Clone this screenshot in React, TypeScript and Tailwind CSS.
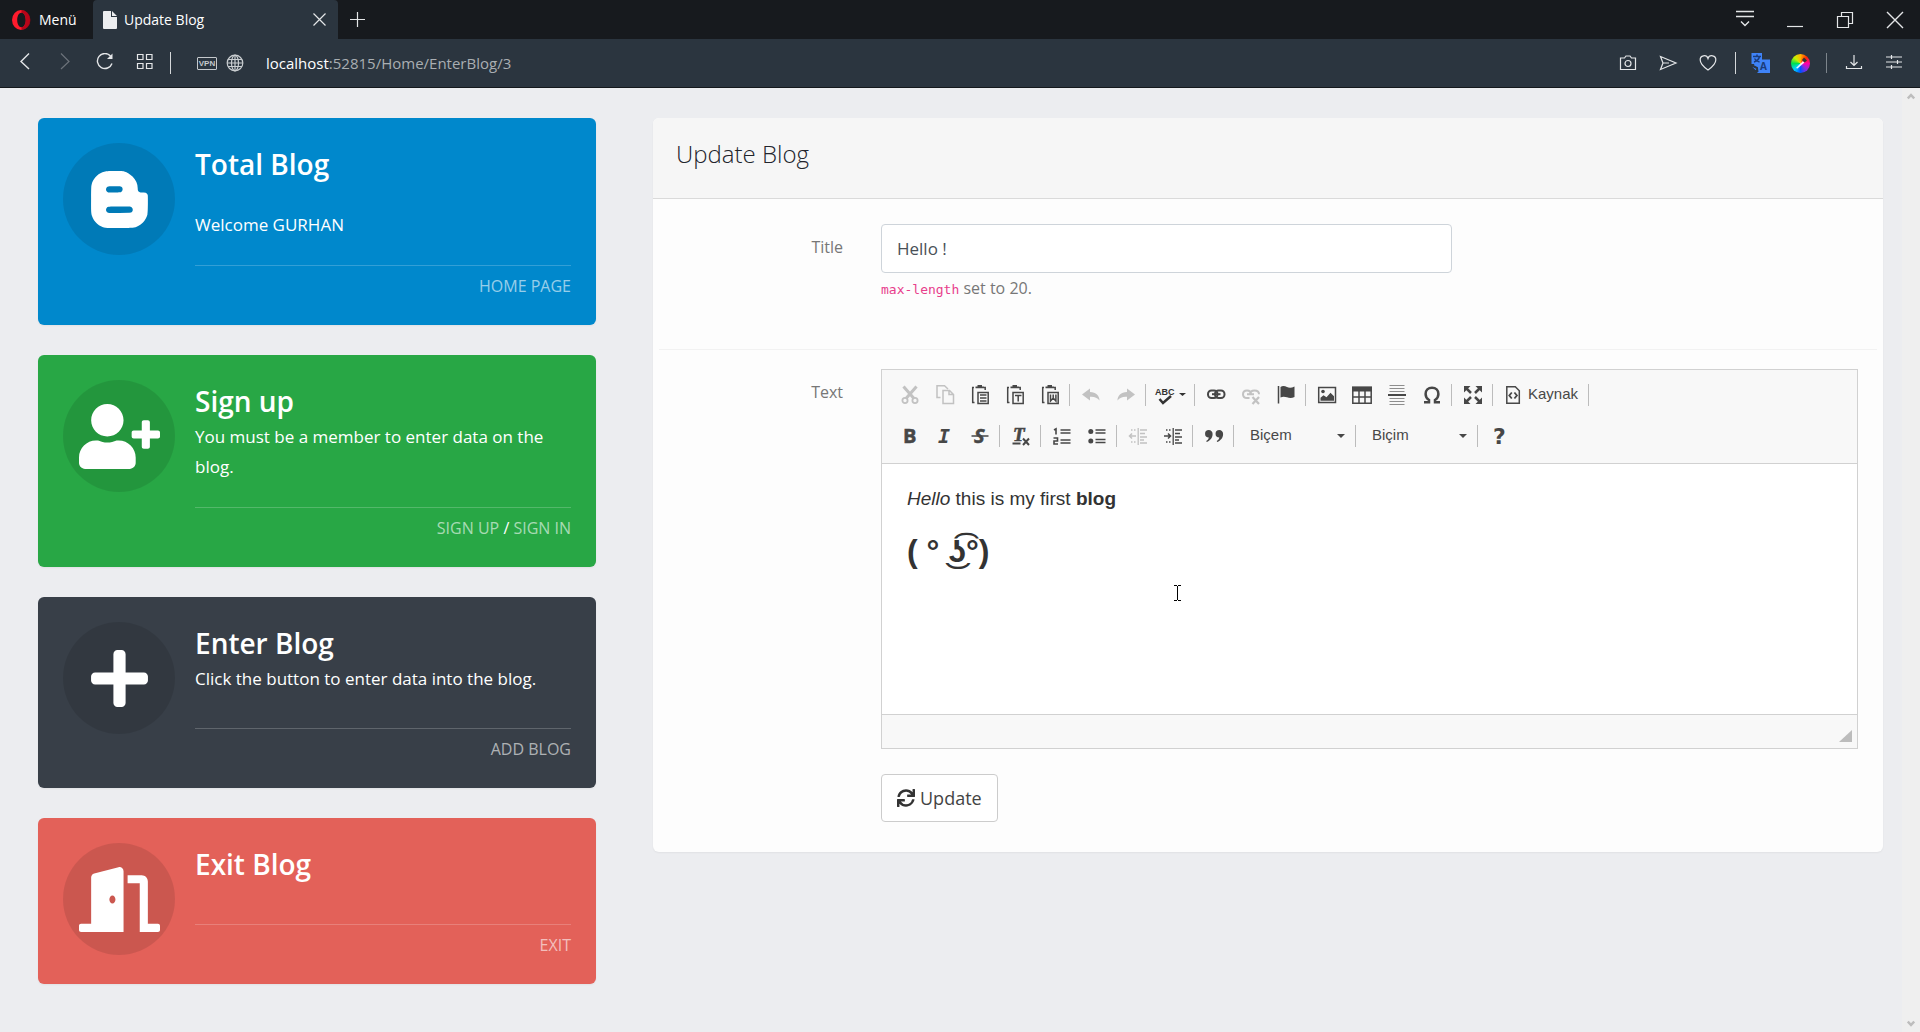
import type { ReactNode } from "react";
import { FaBloggerB, FaDoorOpen, FaPlus, FaSync, FaUserPlus } from "react-icons/fa";

/* ---------- browser chrome ---------- */

function ChromeButton({ label, wide, children }: { label: string; wide?: boolean; children: ReactNode }) {
  return (
    <button
      type="button"
      aria-label={label}
      className={`flex h-full shrink-0 items-center justify-center text-[#e4e6e8] ${wide ? "w-[50px]" : "w-10"}`}
    >
      <svg width="20" height="20" viewBox="0 0 20 20" fill="none" stroke="currentColor" strokeWidth="1.2">
        {children}
      </svg>
    </button>
  );
}

function TabStrip() {
  return (
    <div className="flex h-[39px] bg-[#171a1e]">
      <button type="button" className="flex h-full w-[93px] items-center gap-2 pl-[11px] text-sm text-white">
        <svg width="20" height="20" viewBox="0 0 20 20" className="shrink-0">
          <path fillRule="evenodd" fill="#ff1b2d" d="M10 0a9 10 0 1 0 0 20 9 10 0 1 0 0-20zM10.500 2.800c2.600 0 4.200 3.200 4.200 7.200s-1.600 7.200-4.200 7.200S6.200 14 6.200 10s1.700-7.200 4.300-7.200z" />
          <path fill="#a70014" d="M10.500 0A9 10 0 0 1 10.500 20V17.200C13 17.200 14.700 14 14.700 10S13 2.800 10.500 2.800z" opacity=".8" />
        </svg>
        Menü
      </button>
      <div className="flex w-[245px] items-center rounded-t bg-[#2b353f] pr-[12px] pb-1 pl-[10px]">
        <svg width="14" height="18" viewBox="0 0 14 18" fill="#eceef0" className="mt-1">
          <path d="M1 0h7v6h6v11a1 1 0 0 1-1 1H1a1 1 0 0 1-1-1V1a1 1 0 0 1 1-1zM9 0l5 5H9z" />
        </svg>
        <span className="mt-1 ml-[7px] flex-1 text-sm text-white">Update Blog</span>
        <button type="button" aria-label="Close tab" className="mt-1 text-[#e4e6e8]">
          <svg width="13" height="13" viewBox="0 0 13 13" stroke="currentColor" strokeWidth="1.2">
            <path d="M.5.5l12 12M12.500.5l-12 12" />
          </svg>
        </button>
      </div>
      <ChromeButton label="New tab">
        <path d="M9.500 2v15M2 9.500h15" />
      </ChromeButton>
      <div className="flex-1" />
      <ChromeButton label="Tab menu" wide>
        <path d="M1 1.500h18M1 6.500h18M6 11.500l4 4 4-4" strokeWidth="1.400" />
      </ChromeButton>
      <ChromeButton label="Minimise" wide>
        <path d="M2 16.500h16" />
      </ChromeButton>
      <ChromeButton label="Restore" wide>
        <path d="M2.500 6.500h11v11h-11zM6.500 6.500v-4h11v11h-4" />
      </ChromeButton>
      <ChromeButton label="Close" wide>
        <path d="M2 2l16 16M18 2L2 18" strokeWidth="1.400" />
      </ChromeButton>
    </div>
  );
}

function AddressBar() {
  return (
    <div className="flex h-[49px] items-center border-b border-[#14181c] bg-[#2b353f] pr-[6px] pl-[5px]">
      <ChromeButton label="Back">
        <path d="M14 .5L6 8.500l8 7.500" strokeWidth="1.400" />
      </ChromeButton>
      <ChromeButton label="Forward">
        <path d="M6 .5L14 8.500l-8 7.500" opacity=".35" />
      </ChromeButton>
      <ChromeButton label="Reload">
        <path d="M17 10.500a7.500 7.500 0 1 1-1.500-7.500" strokeWidth="1.400" />
        <path d="M17.500.5v5.500h-5.500z" fill="currentColor" stroke="none" />
      </ChromeButton>
      <ChromeButton label="Speed dial">
        <path d="M2.500 1.500h5.500v5h-5.500zM11.500 1.500h5.500v5h-5.500zM2.500 10.500h5.500v5h-5.500zM11.500 10.500h5.500v5h-5.500z" />
      </ChromeButton>
      <div className="ml-[5px] h-[22px] w-px bg-[#d5d8da]" />
      <button type="button" className="ml-[26px] h-[13px] w-5 rounded-[1px] border border-[#c5c9cc] text-center font-['Liberation_Sans'] text-[8px] leading-[11px] font-bold text-[#c5c9cc]">
        VPN
      </button>
      <svg width="18" height="18" viewBox="0 0 18 18" fill="none" stroke="#c9cdd0" strokeWidth="1.200" className="ml-[9px]">
        <circle cx="9" cy="9" r="7.800" />
        <ellipse cx="9" cy="9" rx="3.500" ry="7.800" />
        <path d="M2 5.500h14M1.200 9h15.600M2 12.500h14M9 1.200v15.600" />
      </svg>
      <span className="ml-[22px] flex-1 text-[15px] text-[#a9aeb2]">
        <span className="text-white">localhost</span>:52815/Home/EnterBlog/3
      </span>
      <ChromeButton label="Snapshot">
        <path d="M2.500 5h4l1.500-2h4l1.500 2h4v11.500h-15z" />
        <circle cx="10" cy="10.500" r="3" />
      </ChromeButton>
      <ChromeButton label="My Flow">
        <path d="M2.500 3.500l15.500 6.500-15.500 6.500 2.500-6.500z M5 10h6" />
      </ChromeButton>
      <ChromeButton label="Bookmark">
        <path d="M10 17C5 13.500 2.200 10.500 2.200 7a4 4 0 0 1 7.800-1.500A4 4 0 0 1 17.800 7c0 3.500-2.800 6.500-7.800 10z" />
      </ChromeButton>
      <div className="mr-1 ml-[7px] h-[22px] w-px bg-[#d5d8da]" />
      <ChromeButton label="Translate">
        <path d="M1.500 0h10.500v6.500h8v13.500h-12.500v-4l-2 1-3-3 2-3h-3v-10z" fill="#3f83f8" stroke="none" />
        <path d="M3 3.500h8M7 1.500v2M4 9c3-1 5-3 5.500-5.500M4.500 5.500c1 2 2.500 3 5 3.500" stroke="#1b3c7a" strokeWidth="1.500" />
        <path d="M1 12l6 3 .5 4" stroke="#2b353f" strokeWidth="2" />
        <text x="10" y="17" fontSize="10" fontWeight="700" fill="#1b3c7a" stroke="none">A</text>
      </ChromeButton>
      <button type="button" aria-label="Colour picker" className="flex h-full w-10 items-center justify-center">
        <span className="flex size-[19px] items-center justify-center rounded-full bg-[conic-gradient(#ffb400,#ff2a00,#ff00a8,#8a2be2,#0050ff,#00d0ff,#00e050,#c8f000,#ffb400)]">
          <svg width="19" height="19" viewBox="0 0 19 19">
            <path d="M5 14l7-7 1.500 1.500-7 6z" fill="#fff" opacity=".9" />
            <path d="M11 6l2-2.500 3 3-2.500 2z" fill="#333" />
          </svg>
        </span>
      </button>
      <div className="mr-[7px] ml-[6px] h-5 w-px bg-[#7d858c]" />
      <ChromeButton label="Downloads">
        <path d="M10 2v10M6.500 9l3.500 3.500 3.500-3.500M2.500 13v2.500h15V13" />
      </ChromeButton>
      <ChromeButton label="Easy setup">
        <path d="M2 4h16M2 9h16M2 14h16M7.500 2v4M13.500 7v4M7.500 12v4" />
      </ChromeButton>
    </div>
  );
}

/* ---------- left cards ---------- */

function Card({ color, icon, title, body, footer }: { color: string; icon: ReactNode; title: string; body: ReactNode; footer: ReactNode }) {
  return (
    <section className={`flex gap-5 rounded-md p-[25px] text-white shadow-xs ${color}`}>
      <div className="flex size-28 shrink-0 items-center justify-center rounded-full bg-black/10">{icon}</div>
      <div className="min-w-0 flex-1">
        <h2 className="text-[28px] leading-[42px] font-semibold">{title}</h2>
        {body}
        <div className="h-[35px] border-t border-white/20 pt-2 text-right leading-6 uppercase">{footer}</div>
      </div>
    </section>
  );
}

function CardLink({ children }: { children: ReactNode }) {
  return (
    <a href="#" className="text-white/60">
      {children}
    </a>
  );
}

/* ---------- editor toolbar ---------- */

function Tool({ label, off, children }: { label: string; off?: boolean; children: ReactNode }) {
  return (
    <button
      type="button"
      aria-label={label}
      disabled={off}
      className={`flex h-[35px] w-[35px] shrink-0 items-center justify-center text-[#474747] ${off ? "opacity-30" : ""}`}
    >
      <svg width="20" height="20" viewBox="0 0 20 20" fill="none" stroke="currentColor" strokeWidth="1.500" className="overflow-visible">
        {children}
      </svg>
    </button>
  );
}

function Sep() {
  return <span className="mr-[3px] ml-[2px] h-[22px] w-px shrink-0 bg-[#bcbcbc]" />;
}

function Clipboard({ children }: { children: ReactNode }) {
  return (
    <>
      <path d="M4 2.500H2.700v15H4.500M15.200 5V2.500H14" />
      <path d="M5.500 3.200V1.500h2V0h4.500v1.500h2v1.700z" fill="currentColor" stroke="none" />
      <path d="M8 7.500h10.200v11H8z" />
      {children}
    </>
  );
}

function Combo({ label }: { label: string }) {
  return (
    <span className="relative flex w-[116px] shrink-0 items-center">
      <select aria-label={label} className="w-full appearance-none bg-transparent pl-[13px] font-['Liberation_Sans',sans-serif] text-[15px] text-[#484848]">
        <option>{label}</option>
      </select>
      <svg width="8" height="4" viewBox="0 0 8 4" className="pointer-events-none absolute right-2" fill="#474747">
        <path d="M0 0h8L4 4z" />
      </svg>
    </span>
  );
}

function Toolbar() {
  return (
    <div className="border-b border-[#d1d1d1] bg-[#f8f8f8] px-[10px] pt-1 pb-[7px]">
      <div className="flex h-[41px] items-center">
        <Tool label="Cut" off>
          <g strokeWidth="1.800">
            <circle cx="5" cy="15.500" r="2.600" />
            <circle cx="15" cy="15.500" r="2.600" />
          </g>
          <path d="M3.500 1.500L14 13.500M16.500 1.500L6 13.500" strokeWidth="3" />
        </Tool>
        <Tool label="Copy" off>
          <path d="M5.500 12.500H2V.8h7.500L13 4M8 5.500h6.500l4 4v9H8zM14 5.500v4h4.500" />
        </Tool>
        <Tool label="Paste">
          <Clipboard>
            <path d="M10 10h6.500M10 13h6.500M10 16h6.500" />
          </Clipboard>
        </Tool>
        <Tool label="Paste as plain text">
          <Clipboard>
            <path d="M10 10.500h6.500M13.200 10.500v6" />
          </Clipboard>
        </Tool>
        <Tool label="Paste from Word">
          <Clipboard>
            <path d="M10.500 9.500v6.500l2.700-3 2.700 3V9.500M13.200 9.500v3.500" />
          </Clipboard>
        </Tool>
        <Sep />
        <Tool label="Undo" off>
          <path d="M1 9.500L9 3.500v3.500c6 0 9.500 4 9.500 8.500-2.500-3-5-4-9.500-3.700v3.700z" fill="currentColor" stroke="none" />
        </Tool>
        <Tool label="Redo" off>
          <path d="M19 9.500L11 3.500v3.500c-6 0-9.500 4-9.500 8.500 2.500-3 5-4 9.500-3.700v3.700z" fill="currentColor" stroke="none" />
        </Tool>
        <Sep />
        <button type="button" aria-label="Spell check" className="flex h-[35px] w-[43px] shrink-0 items-center gap-1 pl-[6px] text-[#333]">
          <svg width="20" height="20" viewBox="0 0 20 20" className="overflow-visible">
            <text x="0" y="10" fontSize="9" fontFamily="Liberation Sans" fontWeight="700" fill="#333">ABC</text>
            <path d="M4.500 14l3.500 4L16 11" fill="none" stroke="#333" strokeWidth="2.500" />
          </svg>
          <svg width="7" height="3" viewBox="0 0 7 3" fill="#333">
            <path d="M0 0h7L3.500 3z" />
          </svg>
        </button>
        <Sep />
        <Tool label="Link">
          <rect x="2" y="5.500" width="9.500" height="7.500" rx="3.500" strokeWidth="2" />
          <rect x="9" y="5.500" width="9.500" height="7.500" rx="3.500" strokeWidth="2" />
          <path d="M6 9.200h8.500" strokeWidth="2" />
        </Tool>
        <Tool label="Unlink" off>
          <path d="M10 9.500c0-3-1-4-4-4s-4 1-4 3.700 1 3.800 4 3.800h2.500M9 9.500c0-3 1.500-4 4.500-4s4.500 1 4.500 3.700M6 9.200h7" strokeWidth="2" />
          <path d="M11.500 12l6.500 7M18 12l-6.500 7" strokeWidth="2.200" />
        </Tool>
        <Tool label="Anchor">
          <path d="M2.500 1v17.500" />
          <path d="M4.500 2c2-1.500 4.500-1 6.500 0s4.500 1 7.500-.5V12c-3 1.500-5.500 1-7.500.3s-4.500-1-6.500.2z" fill="currentColor" stroke="none" />
        </Tool>
        <Sep />
        <Tool label="Image">
          <path d="M1.700 2.500h16.800v15H1.700z" />
          <circle cx="6" cy="6.500" r="1.800" fill="currentColor" stroke="none" />
          <path d="M3.500 15.800v-3l3-2.500 3 2 4-4.500 3.500 3.500v4.500z" fill="currentColor" stroke="none" />
        </Tool>
        <Tool label="Table">
          <path d="M.8 2.500h18.400v15.800H.8zM.8 12h18.400M7 6v12M13 6v12" />
          <path d="M0 1.500h20V6.500H0z" fill="currentColor" stroke="none" />
        </Tool>
        <Tool label="Horizontal line">
          <path d="M2.500.5h15M2.500 3.500h15M2.500 6.500h15M2.500 13.500h15M2.500 16.500h15M2.500 19.500h15" strokeWidth="1" opacity=".6" />
          <path d="M1 10h18" strokeWidth="2" />
        </Tool>
        <Tool label="Special character">
          <path d="M2 17.200h5v-2.200C4.500 13.500 3.600 11.500 3.600 9c0-3.700 2.600-6.300 6.400-6.300s6.400 2.600 6.400 6.300c0 2.500-.9 4.500-3.400 6v2.200h5" strokeWidth="2.500" />
        </Tool>
        <Sep />
        <Tool label="Maximise">
          <path d="M3 3l5 5M17 3l-5 5M3 17l5-5M17 17l-5-5" strokeWidth="2.500" />
          <path d="M1 1h6.500L1 7.500zM19 1v6.500L12.500 1zM1 19v-6.500L7.500 19zM19 19h-6.500L19 12.500z" fill="currentColor" stroke="none" />
        </Tool>
        <Sep />
        <button type="button" className="flex h-[35px] w-[90px] shrink-0 items-center gap-[5px] pl-[7px] font-['Liberation_Sans',sans-serif] text-[15px] text-[#484848]">
          <svg width="20" height="20" viewBox="0 0 20 20" fill="none" stroke="currentColor" strokeWidth="1.500" className="shrink-0">
            <path d="M3.800 1.800h8.500l4 4v12.400H3.800z" />
            <path d="M8.800 7.500L6.300 10.500l2.500 3M11.400 7.500l2.500 3-2.500 3" strokeWidth="1.800" />
          </svg>
          Kaynak
        </button>
        <Sep />
      </div>
      <div className="flex h-[41px] items-center">
        <Tool label="Bold">
          <text x="3" y="17" fontFamily="Open Sans" fontSize="20" fontWeight="700" fill="currentColor" stroke="currentColor" strokeWidth=".5">B</text>
        </Tool>
        <Tool label="Italic">
          <text x="3" y="17" fontFamily="DejaVu Sans Mono" fontSize="20" fontStyle="italic" fontWeight="700" fill="currentColor" stroke="none">I</text>
        </Tool>
        <Tool label="Strikethrough">
          <text x="4" y="17" fontFamily="Open Sans" fontSize="20" fontStyle="italic" fontWeight="700" fill="currentColor" stroke="currentColor" strokeWidth=".5">S</text>
          <path d="M1.500 10h17" />
        </Tool>
        <Sep />
        <Tool label="Remove format">
          <text x="2" y="15" fontFamily="Liberation Serif" fontSize="19" fontStyle="italic" fontWeight="700" fill="currentColor" stroke="currentColor" strokeWidth=".6">T</text>
          <path d="M1.500 17.500h8M12 12.500l6 6.500M18 12.500L12 19" strokeWidth="2" />
        </Tool>
        <Sep />
        <Tool label="Numbered list">
          <path d="M8.500 4h10M8.500 7h10M8.500 14h10M8.500 17h10" />
          <path d="M2 4l2-1.200V8.500M1.500 12h4v3h-3.500v3h4" strokeWidth="1.600" />
        </Tool>
        <Tool label="Bulleted list">
          <path d="M8.500 4h10M8.500 7h10M8.500 13.500h10M8.500 16.500h10" />
          <circle cx="3.800" cy="5.500" r="2.500" fill="currentColor" stroke="none" />
          <circle cx="3.800" cy="15" r="2.500" fill="currentColor" stroke="none" />
        </Tool>
        <Sep />
        <Tool label="Decrease indent" off>
          <path d="M10.200 2v17M12 4h7M12 7.500h5M12 11h7M12 14h4M12 17h7" strokeWidth="1.300" />
          <path d="M3 4h6M3 16h6" strokeWidth="1.300" strokeDasharray="1.500 1.500" />
          <path d="M8 10H1.500M4 7.500L1.500 10 4 12.500" />
        </Tool>
        <Tool label="Increase indent">
          <path d="M10.200 2v17M12 4h7M12 7.500h5M12 11h7M12 14h4M12 17h7" strokeWidth="1.300" />
          <path d="M3 4h6M3 16h6" strokeWidth="1.300" strokeDasharray="1.500 1.500" />
          <path d="M1 10h6M5 7.500L7.500 10 5 12.500" />
        </Tool>
        <Sep />
        <Tool label="Block quote">
          <path d="M4.800 4a3.800 3.800 0 0 1 3.800 4c0 4-2.500 6.500-5.800 8l-.6-1c1.600-1 2.400-2 2.600-3.500A3.750 3.750 0 0 1 4.800 4zM15.300 4a3.800 3.800 0 0 1 3.800 4c0 4-2.500 6.500-5.800 8l-.6-1c1.600-1 2.400-2 2.600-3.500a3.750 3.750 0 0 1 0-7.500z" fill="currentColor" stroke="none" />
        </Tool>
        <Sep />
        <Combo label="Biçem" />
        <Sep />
        <Combo label="Biçim" />
        <Sep />
        <Tool label="About">
          <text x="4" y="18" fontFamily="DejaVu Sans" fontSize="22" fontWeight="700" fill="currentColor" stroke="none">?</text>
        </Tool>
      </div>
    </div>
  );
}

function Editor() {
  return (
    <div className="border border-[#d1d1d1] bg-white">
      <Toolbar />
      <div className="relative h-[250px]">
        <div
          id="text"
          role="textbox"
          aria-labelledby="text-label"
          aria-multiline="true"
          contentEditable
          suppressContentEditableWarning
          className="h-full px-[25px] pt-[22px] font-['Liberation_Sans','DejaVu_Sans',sans-serif] text-[#333]"
        >
          <p className="text-[19px] leading-[26px]">
            <em>Hello</em> this is my first <strong>blog</strong>
          </p>
          <p className="mt-5 text-[32px] leading-[38px] font-bold">( ° ͜ʖ͡°)</p>
        </div>
        <svg width="7" height="16" viewBox="0 0 7 16" className="absolute top-[121px] left-[292px]" stroke="#000" fill="none">
          <path d="M0 .5h3M4 .5h3M3.500 1v14M0 15.500h3M4 15.500h3" />
        </svg>
      </div>
      <div className="flex h-[34px] items-end justify-end border-t border-[#d1d1d1] bg-[#f8f8f8] pr-[5px] pb-[6px]">
        <svg width="13" height="12" viewBox="0 0 13 12" fill="#bcbcbc">
          <path d="M13 0v12H0z" />
        </svg>
      </div>
    </div>
  );
}

/* ---------- page ---------- */

const cardIcon = "h-[65px] w-[81px]";

export default function App() {
  return (
    <div className="flex min-h-screen flex-col bg-[#ecedf0] font-['Open_Sans',sans-serif] text-base">
      <header>
        <TabStrip />
        <AddressBar />
      </header>
      <div className="flex flex-1">
        <main className="grid flex-1 grid-cols-[558fr_1230fr] items-start gap-[57px] py-[30px] pr-[19px] pl-[38px]">
          <div className="flex flex-col gap-[30px]">
            <Card
              color="bg-[#0088cc]"
              icon={<FaBloggerB className={cardIcon} />}
              title="Total Blog"
              body={<p className="py-[25px] text-[17px] leading-[30px]">Welcome GURHAN</p>}
              footer={<CardLink>Home Page</CardLink>}
            />
            <Card
              color="bg-[#28a745]"
              icon={<FaUserPlus className={cardIcon} />}
              title="Sign up"
              body={<p className="pb-[25px] text-[17px] leading-[30px]">You must be a member to enter data on the blog.</p>}
              footer={
                <>
                  <CardLink>Sign up</CardLink> / <CardLink>Sign in</CardLink>
                </>
              }
            />
            <Card
              color="bg-[#383f48]"
              icon={<FaPlus className={cardIcon} />}
              title="Enter Blog"
              body={<p className="pb-[34px] text-[17px] leading-[30px]">Click the button to enter data into the blog.</p>}
              footer={<CardLink>Add Blog</CardLink>}
            />
            <Card
              color="bg-[#e36159]"
              icon={<FaDoorOpen className={cardIcon} />}
              title="Exit Blog"
              body={<div className="h-[39px]" />}
              footer={<CardLink>Exit</CardLink>}
            />
          </div>

          <form className="rounded-md bg-[#fdfdfd] shadow-xs" onSubmit={(e) => e.preventDefault()}>
            <h1 className="h-[81px] rounded-t-md border-b border-[#dadada] bg-[#f6f6f6] px-[23px] pt-[18px] text-2xl leading-9 font-light text-[#22242c]">
              Update Blog
            </h1>
            <div className="px-[6px] pt-[25px] pb-[30px]">
              <div className="grid grid-cols-12 border-b border-[#f2f2f2] pb-[41px]">
                <label htmlFor="title" className="col-span-2 px-[19px] pt-[11px] text-right leading-6 text-[#777]">
                  Title
                </label>
                <div className="col-span-6 px-[19px]">
                  <input
                    id="title"
                    defaultValue="Hello !"
                    maxLength={20}
                    className="h-[49px] w-full rounded border border-[#ced4da] bg-white px-[15px] text-[17px] text-[#495057]"
                  />
                  <p className="mt-[3px] h-8 leading-6 text-[#777]">
                    <code className="font-['DejaVu_Sans_Mono',monospace] text-[13px] text-[#e83e8c]">max-length</code> set to 20.
                  </p>
                </div>
              </div>
              <div className="grid grid-cols-12 pt-[19px]">
                <span id="text-label" className="col-span-2 px-[19px] pt-[11px] text-right leading-6 text-[#777]">
                  Text
                </span>
                <div className="col-span-10 px-[19px]">
                  <Editor />
                  <button
                    type="submit"
                    className="mt-[25px] flex h-12 items-center gap-[5px] rounded border border-[#ccc] bg-white px-[15px] text-lg text-[#444]"
                  >
                    <FaSync className="size-[18px] text-[#333]" />
                    Update
                  </button>
                </div>
              </div>
            </div>
          </form>
        </main>
        <div className="flex w-[18px] shrink-0 flex-col items-center justify-between bg-[#efefef] py-[5px]" aria-hidden="true">
          <svg width="8" height="7" viewBox="0 0 8 7" fill="none" stroke="#bdbdbd" strokeWidth="2.500">
            <path d="M.8 5.500L4 2l3.200 3.500" />
          </svg>
          <svg width="8" height="7" viewBox="0 0 8 7" fill="none" stroke="#bdbdbd" strokeWidth="2.500">
            <path d="M.8 1.500L4 5l3.200-3.500" />
          </svg>
        </div>
      </div>
    </div>
  );
}
